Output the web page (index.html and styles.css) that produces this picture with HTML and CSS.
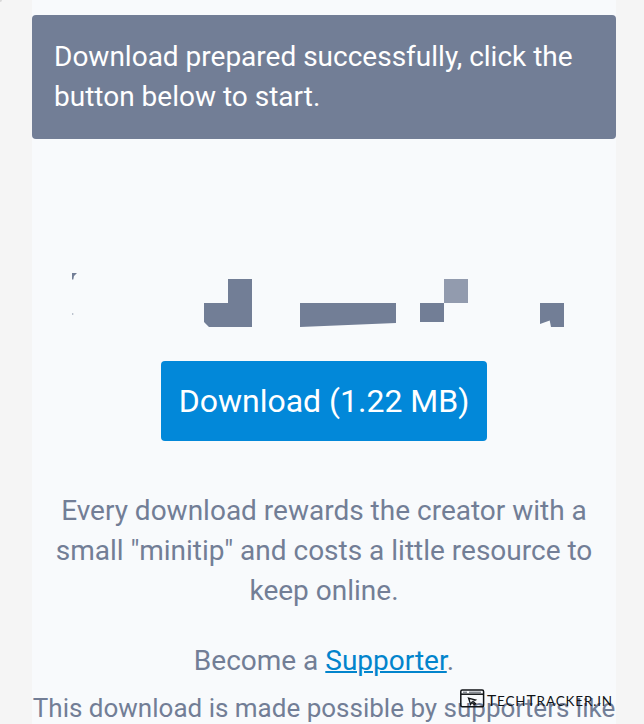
FILE: index.html
```html
<!DOCTYPE html>
<html lang="en">
<head>
<meta charset="utf-8">
<title>Download</title>
<link rel="stylesheet" href="styles.css">
</head>
<body>
<main class="panel">
  <div class="notice">Download prepared successfully, click the button below to start.</div>
  <svg class="blocks" width="584" height="64" viewBox="32 268 584 64" aria-hidden="true">
    <g class="block-fill">
      <path d="M72 273h5l-3 3-.7 3.500H72z"/>
      <path d="M72 313l2 1-2 1z" opacity=".6"/>
      <path d="M228 279h24v48h-43l-5-5v-19h24z"/>
      <path d="M300 303h96v20l-96 4z"/>
      <path d="M420 303h24v19h-24z"/>
      <path d="M444 279h24v24h-24z" opacity=".77"/>
      <path d="M540 303h24v24h-13l-1.300-6.500-9.700 3.500z"/>
    </g>
  </svg>
  <a class="button" href="#">Download (1.22 MB)</a>
  <p class="about">Every download rewards the creator with a small "minitip" and costs a little resource to keep online.</p>
  <p class="become">Become a <a class="link" href="#">Supporter</a>.</p>
  <p class="supporters">This download is made possible by supporters like</p>
</main>
<svg class="watermark" width="160" height="26" viewBox="457 686 160 26">
  <rect class="window" x="460.800" y="690" width="22.800" height="16.800" rx="1.500"/>
  <path class="window" d="M461 694.200h22.500"/>
  <path class="window-dots" d="M463 692.200h4M469 692.200h12"/>
  <path class="cursor" d="M468.500 698l7 2-2.600 1.400 2.800 2.300-1.200 1-2.700-2.300-1.200 2z"/>
  <text class="brand" x="487" y="705.500" textLength="126" lengthAdjust="spacingAndGlyphs"><tspan class="cap">T</tspan>ECH<tspan class="cap">T</tspan>RACKER.IN</text>
</svg>
<span class="corner"></span>
</body>
</html>
```

FILE: styles.css
```css
* { box-sizing: border-box; }
html { overflow: hidden; }
body {
  margin: 0;
  height: 724px;
  overflow: hidden;
  position: relative;
  background: #f5f5f5;
  color: #727e96;
  font: 28px/40px Roboto, sans-serif;
}
.panel {
  width: 584px;
  height: 724px;
  margin-left: 32px;
  padding-top: 15px;
  display: flex;
  flex-direction: column;
  align-items: center;
  background: #f8fafc;
  overflow: hidden;
}
.notice {
  width: 584px;
  height: 124px;
  padding: 22px;
  border-radius: 4px;
  background: #727e96;
  color: #fff;
  flex: none;
}
.blocks { margin-top: 129px; flex: none; }
.block-fill { fill: #727e96; }
.button {
  width: 326px;
  height: 80px;
  margin-top: 29px;
  border-radius: 4px;
  background: #0288d9;
  color: #fff;
  font-size: 32px;
  line-height: 80px;
  text-align: center;
  text-decoration: none;
  white-space: nowrap;
  flex: none;
}
p { margin: 0; text-align: center; flex: none; }
.about { width: 560px; margin-top: 50px; }
.become { margin-top: 30px; }
.link { color: #0284cc; text-decoration-thickness: 2px; }
.supporters { margin-top: 7px; font-size: 26px; line-height: 40px; white-space: nowrap; }
.watermark { position: absolute; left: 457px; top: 686px; }
.window { fill: none; stroke: #101316; stroke-width: 1.5; }
.window-dots { fill: none; stroke: #555b64; stroke-width: 1; }
.cursor { fill: none; stroke: #101316; stroke-width: 1.3; }
.brand { font: 12.5px Lato, sans-serif; letter-spacing: 0.8px; fill: #101316; }
.cap { font-size: 14.5px; }
.corner {
  position: absolute;
  left: 0;
  top: 0;
  width: 2px;
  height: 2px;
  background: #d9d9d9;
  border-bottom-right-radius: 2px;
}
```
